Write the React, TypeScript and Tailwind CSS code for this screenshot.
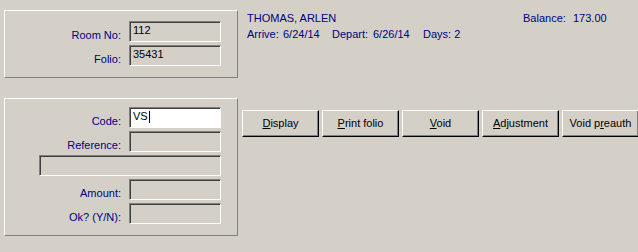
import React from 'react';

const font = { fontFamily: '"Liberation Sans", Arial, sans-serif' };

const Field: React.FC<{ value?: string; white?: boolean; caret?: boolean; className?: string }> = ({
  value,
  white,
  caret,
  className = 'w-[92px]',
}) => (
  <div
    className={`${className} h-[21px] border border-t-[#808080] border-l-[#808080] border-b-white border-r-white shadow-[inset_1px_1px_0_#404040] pl-[3px] pt-[2px] text-[11px] leading-[13px] text-black flex items-start ${
      white ? 'bg-white' : 'bg-[#d4d0c8]'
    }`}
  >
    <span>{value}</span>
    {caret && <span className="inline-block w-px h-[12px] bg-black ml-[1px] mt-[1px]" />}
  </div>
);

const Row: React.FC<{ label: string; children: React.ReactNode }> = ({ label, children }) => (
  <div className="flex items-end">
    <span className="w-[116px] text-right text-[11px] leading-[13px] text-[#000080] mr-[8px]">{label}</span>
    {children}
  </div>
);

const Button: React.FC<{ children: React.ReactNode }> = ({ children }) => (
  <button className="w-[77px] h-[27px] shrink-0 bg-[#d4d0c8] border border-t-white border-l-white border-b-black border-r-black shadow-[inset_-1px_-1px_0_#808080] text-[11px] leading-[13px] text-black flex items-center justify-center">
    <span>{children}</span>
  </button>
);

export default function App() {
  return (
    <div className="w-[638px] h-[252px] bg-[#d4d0c8] flex overflow-hidden" style={font}>
      <div className="pl-[4px] pt-[10px] flex flex-col">
        <div className="w-[234px] h-[68px] border border-t-white border-l-white border-b-[#808080] border-r-[#808080] pt-[10px] flex flex-col gap-[3px]">
          <Row label="Room No:">
            <Field value="112" />
          </Row>
          <Row label="Folio:">
            <Field value="35431" />
          </Row>
        </div>
        <div className="mt-[20px] w-[234px] h-[138px] border border-t-white border-l-white border-b-[#808080] border-r-[#808080] pt-[8px] flex flex-col gap-[3px]">
          <Row label="Code:">
            <Field value="VS" white caret />
          </Row>
          <Row label="Reference:">
            <Field />
          </Row>
          <div className="pl-[34px]">
            <Field className="w-[182px]" />
          </div>
          <Row label="Amount:">
            <Field />
          </Row>
          <Row label="Ok? (Y/N):">
            <Field />
          </Row>
        </div>
      </div>

      <div className="flex flex-col">
        <div className="pl-[9px] pt-[10px] text-[11px] leading-[16px] text-[#000080]">
          <div className="flex">
            <span className="w-[276px]">THOMAS, ARLEN</span>
            <span className="w-[50px]">Balance:</span>
            <span>173.00</span>
          </div>
          <div className="flex">
            <span className="w-[36px]">Arrive:</span>
            <span className="w-[49px]">6/24/14</span>
            <span className="w-[41px]">Depart:</span>
            <span className="w-[50px]">6/26/14</span>
            <span>Days: 2</span>
          </div>
        </div>
        <div className="pl-[4px] mt-[68px] flex gap-[3px]">
          <Button>
            <u>D</u>isplay
          </Button>
          <Button>
            <u>P</u>rint folio
          </Button>
          <Button>
            <u>V</u>oid
          </Button>
          <Button>
            <u>A</u>djustment
          </Button>
          <Button>
            Void p<u>r</u>eauth
          </Button>
        </div>
      </div>
    </div>
  );
}
